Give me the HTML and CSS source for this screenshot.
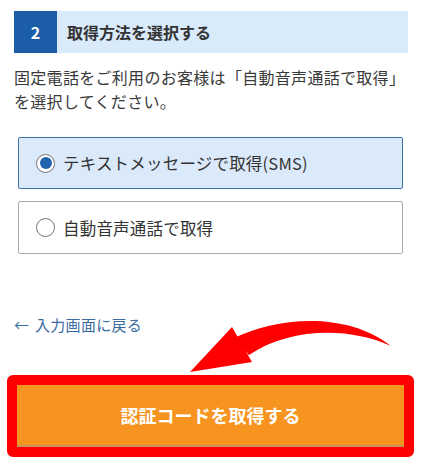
FILE: index.html
```html
<!DOCTYPE html>
<html lang="ja">
<head>
<meta charset="utf-8">
<title>取得方法を選択する</title>
<link rel="stylesheet" href="styles.css">
</head>
<body>
<div class="page">
  <div class="step-header">
    <div class="step-num">2</div>
    <div class="step-title">取得方法を選択する</div>
  </div>
  <p class="desc">固定電話をご利用のお客様は「自動音声通話で取得」<br>を選択してください。</p>
  <div class="options">
    <label class="option selected">
      <span class="radio"><span class="dot"></span></span>
      <span class="opt-text">テキストメッセージで取得(SMS)</span>
    </label>
    <label class="option">
      <span class="radio"></span>
      <span class="opt-text">自動音声通話で取得</span>
    </label>
  </div>
  <a class="back" href="#"><span class="back-arrow">←</span>入力画面に戻る</a>
  <div class="highlight">
    <div class="submit">認証コードを取得する</div>
  </div>
  <svg class="arrow" width="423" height="470" viewBox="0 0 423 470" aria-hidden="true">
    <path d="M190,372 L232,327 L252,362 Z" fill="#ff0000"/>
    <path d="M234,338 C 275,318 345,310 391,346 C 350,327 290,327 249,355 Z" fill="#ff0000"/>
  </svg>
</div>
</body>
</html>
```

FILE: styles.css
```css
* { box-sizing: border-box; }
html, body {
  margin: 0;
  padding: 0;
  background: #ffffff;
}
body {
  font-family: "Noto Sans CJK JP", "Noto Sans", sans-serif;
  color: #333333;
}
.page {
  position: relative;
  width: 423px;
  height: 470px;
  padding-top: 11px;
  overflow: hidden;
}
.step-header {
  display: flex;
  height: 42px;
  margin: 0 15px 0 14px;
  background: #d9eafb;
}
.step-num {
  width: 43px;
  background: #1b5ea7;
  color: #ffffff;
  font-weight: 700;
  font-size: 16px;
  display: flex;
  align-items: center;
  justify-content: center;
}
.step-title {
  display: flex;
  align-items: center;
  padding-left: 10px;
  font-weight: 700;
  font-size: 16px;
  color: #333333;
}
.desc {
  margin: 12px 0 0 14px;
  font-size: 16px;
  line-height: 24px;
  letter-spacing: 0.3px;
  color: #3a3a3a;
}
.options {
  display: flex;
  flex-direction: column;
  gap: 12px;
  margin: 24px 20px 0 18px;
}
.option {
  display: flex;
  align-items: center;
  height: 53px;
  padding-left: 17px;
  border: 1px solid #ababab;
  border-radius: 2px;
  background: #ffffff;
}
.option.selected {
  height: 52px;
  border-color: #3e6fa8;
  background: #dbeafb;
}
.radio {
  width: 19px;
  height: 19px;
  border: 1px solid #737373;
  border-radius: 50%;
  background: #ffffff;
  display: flex;
  align-items: center;
  justify-content: center;
  flex-shrink: 0;
}
.dot {
  width: 12px;
  height: 12px;
  border-radius: 50%;
  background: #2263b0;
}
.opt-text {
  margin-left: 8px;
  font-size: 16.5px;
  letter-spacing: 0.2px;
  color: #333333;
}
.back {
  display: block;
  margin: 60px 0 0 14px;
  font-size: 15px;
  line-height: 22px;
  letter-spacing: 0.3px;
  color: #3b6c9f;
  text-decoration: none;
}
.back-arrow {
  display: inline-block;
  width: 21px;
}
.highlight {
  margin: 39px 9px 0 7px;
  border: 10px solid #ff0000;
  border-radius: 6px;
  background: #ff0000;
}
.submit {
  height: 62px;
  background: #f7941f;
  border-bottom: 2px solid #c9925a;
  color: #ffffff;
  font-weight: 700;
  font-size: 18px;
  display: flex;
  align-items: center;
  justify-content: center;
}
.arrow {
  position: absolute;
  left: 0;
  top: 0;
  pointer-events: none;
}
```
